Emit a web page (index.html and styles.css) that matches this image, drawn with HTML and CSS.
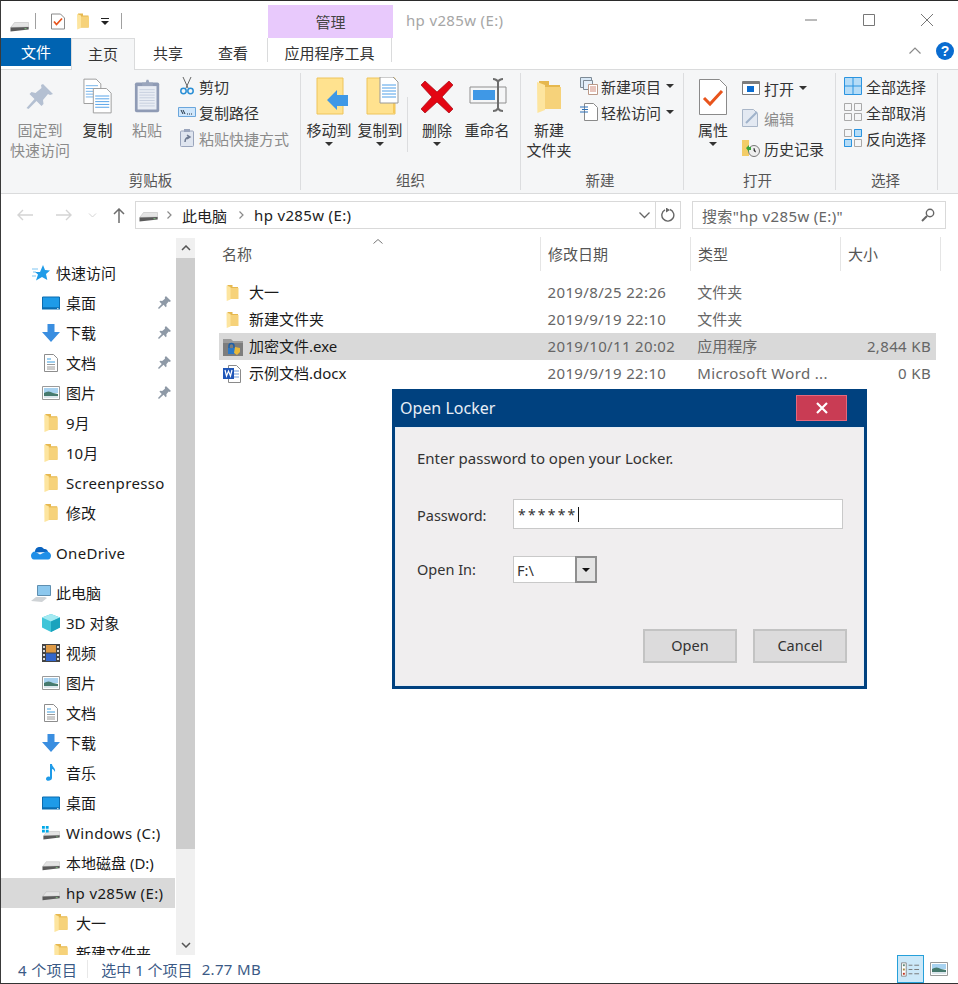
FILE: index.html
```html
<!DOCTYPE html>
<html lang="zh-CN">
<head>
<meta charset="utf-8">
<title>hp v285w (E:)</title>
<link rel="stylesheet" href="styles.css">
</head>
<body>
<svg class="defs" width="0" height="0" aria-hidden="true">
  <symbol id="folder" viewBox="0 0 12 16"><path fill="#e6b84f" d="M1 0h5v2h5.5v12H1z"/><path fill="#f6d27a" d="M3 3h9v11H3z"/><path fill="#fde59f" d="M0 .5 4 2v12.5l-3.800 1.500z"/></symbol>
  <symbol id="drive" viewBox="0 0 19 10"><path fill="#e4e4e4" stroke="#b5b5b5" stroke-width=".5" d="M4.500 .5h14l.2 4.500-18 .5z"/><path fill="#5a5a5a" d="M.5 5.500 18.700 5v2.500L.5 9.500z"/><path fill="#7fbf7f" d="M14.500 6.200h2v1h-2z"/></symbol>
  <symbol id="pin" viewBox="0 0 14 14"><path fill="#8e99a6" d="M8.500 0 14 5.500l-1.500 1-1-.5-2.500 3 .3 2-1 1-2.300-2.500L1 14l-1-1 4-4.500L1.500 6l1-1 2 .5 3-2.500-.2-1.500z"/></symbol>
  <symbol id="pinbig" viewBox="0 0 28 28"><path fill="#b4c0d2" d="M17 1 27 11l-3 1-2-1-5 6 .5 4-2 2-5-5-8 8-2-1 8-9-5-5 2-2 4 1 6-5-.5-3z"/></symbol>
  <symbol id="doc" viewBox="0 0 14 18"><path fill="#fff" stroke="#8d8d8d" d="M.5.5h9l4 4v13H.5z"/><path fill="none" stroke="#3ea0e0" d="M3 5h4M3 8h8"/><path fill="none" stroke="#9a9a9a" d="M3 10.500h8M3 13h8M3 15h8"/></symbol>
  <symbol id="pic" viewBox="0 0 18 14"><path fill="#fff" stroke="#9a9a9a" d="M.5.5h17v13H.5z"/><path fill="#a8d2f0" d="M2 2h14v5H2z"/><path fill="#467a6e" d="M2 7c3-2 6-2 9 0l5 1v2H2z"/><path fill="#dce6ec" d="M2 10h14v2H2z"/></symbol>
  <symbol id="desk" viewBox="0 0 18 13"><path fill="#1e9be8" stroke="#0a6cb0" d="M.5.5h17v11H.5z"/><path fill="#0a6cb0" d="M0 11h18v2H0z"/><path fill="#fff" d="M15 11.500h1.500v.8H15z"/></symbol>
  <symbol id="down" viewBox="0 0 18 18"><path fill="#3a8ee0" d="M5.500 0h7v8H18l-9 10-9-10h5.500z"/></symbol>
  <symbol id="check" viewBox="0 0 14 16"><path fill="#fff" stroke="#8a8a8a" d="M.5.5h9l4 4v11H.5z"/><path fill="none" stroke="#e8541c" stroke-width="1.800" d="M3 8l2.500 3L11 5"/></symbol>
  <symbol id="grid" viewBox="0 0 18 18"><g fill="none" stroke="#a9a9a9"><path d="M.5.5h7v7h-7zM10.500.5h7v7h-7zM.5 10.500h7v7h-7zM10.500 10.500h7v7h-7z"/></g></symbol>
</svg>

<div class="window">
  <header class="titlebar">
    <div class="qat">
      <svg class="q-drive"><use href="#drive"/></svg>
      <i class="q-sep"></i>
      <svg class="q-check"><use href="#check"/></svg>
      <svg class="q-folder"><use href="#folder"/></svg>
      <svg class="q-drop" viewBox="0 0 8 7"><path fill="#222" d="M0 0h8v1H0zM0 3h8L4 7z"/></svg>
      <i class="q-sep q-sep2"></i>
    </div>
    <div class="ctx-tab">管理</div>
    <div class="win-title lat">hp v285w (E:)</div>
    <div class="win-btns">
      <svg viewBox="0 0 12 12"><path stroke="#777" d="M0 6h12"/></svg>
      <svg viewBox="0 0 12 12"><path fill="none" stroke="#777" d="M.5.5h11v11H.5z"/></svg>
      <svg viewBox="0 0 12 12"><path stroke="#777" d="M0 0l12 12M12 0 0 12"/></svg>
    </div>
  </header>

  <nav class="tabs">
    <div class="tab tab-file">文件</div>
    <div class="tab tab-home">主页</div>
    <div class="tab tab-share">共享</div>
    <div class="tab tab-view">查看</div>
    <div class="tab tab-app">应用程序工具</div>
    <div class="tabs-right">
      <svg class="collapse" viewBox="0 0 12 7"><path fill="none" stroke="#8a8a8a" stroke-width="1.200" d="M.5 6.500 6 1l5.500 5.500"/></svg>
      <span class="help">?</span>
    </div>
  </nav>

  <section class="ribbon">
    <div class="group g-clip">
      <div class="g-body">
        <div class="big b-pin dis"><svg class="ri" viewBox="0 0 28 28"><use href="#pinbig"/></svg><span>固定到<br>快速访问</span></div>
        <div class="big b-copy"><svg class="ri" viewBox="0 0 32 38">
          <path fill="#fff" stroke="#9a9a9a" d="M1 1h13l5 5v21H1z"/><path stroke="#6fb0ea" d="M3 8h13M3 11h13M3 14h13M3 17h13M3 20h13"/>
          <path fill="#fff" stroke="#9a9a9a" d="M11 11h14l5 5v21H11z"/><path stroke="#4f9fe8" d="M13 19h15M13 22h15M13 25h15M13 28h15M13 31h15"/></svg><span>复制</span></div>
        <div class="big b-paste dis"><svg class="ri" viewBox="0 0 30 38">
          <rect x="1" y="4" width="27" height="33" rx="2" fill="#8f9bb5"/><path fill="#e9edf4" d="M4 8h21v26H4z"/><path stroke="#c4cddd" d="M6 12h17M6 15h17M6 18h17M6 21h17M6 24h17M6 27h17M6 30h17"/><path fill="#9aa5bc" d="M9 4h4l1-3h2l1 3h4v4H9z"/></svg><span>粘贴</span></div>
        <ul class="smalls">
          <li><svg viewBox="0 0 14 18"><path fill="none" stroke="#666" d="M3 0l5 11M11 0 6 11"/><g fill="none" stroke="#2a8fd6" stroke-width="1.500"><circle cx="3.500" cy="14" r="2.700"/><circle cx="10.500" cy="14" r="2.700"/></g></svg>剪切</li>
          <li class="w-ic"><svg viewBox="0 0 18 10"><path fill="#cfe6fb" stroke="#6aa6dc" d="M.5.500h17v9H.5z"/><path fill="none" stroke="#234" d="M3 3l2 4M5 3l2 4"/><path stroke="#234" d="M9 7h1M11 7h1M13 7h1"/></svg>复制路径</li>
          <li class="dis"><svg viewBox="0 0 14 18"><rect x=".5" y="2" width="13" height="15.500" rx="1" fill="#dfe5ef" stroke="#9aa5bc"/><path fill="#9aa5bc" d="M4 0h6v3H4z"/><path fill="none" stroke="#6f7b92" stroke-width="1.500" d="M5 13c0-3 2-5 5-5M7 6l3 2-3 2"/></svg>粘贴快捷方式</li>
        </ul>
      </div>
      <div class="g-label">剪贴板</div>
    </div>

    <div class="group g-org">
      <div class="g-body">
        <div class="big b-move"><svg class="ri" viewBox="0 0 34 38"><path fill="#ffe28f" stroke="#eec45a" d="M1 1h26v36H1z"/><path fill="#3f98e6" d="M12 27 22 17v5h11v11H22v4z" transform="translate(-1 -4)"/></svg><span>移动到</span><i class="caret"></i></div>
        <div class="big b-copyto"><svg class="ri" viewBox="0 0 34 38"><path fill="#ffe28f" stroke="#eec45a" d="M1 1h28v36H1z"/><path fill="#f5c95c" d="M27 24h2v12h-2z"/><path fill="#fff" stroke="#9a9a9a" d="M14 0h13l5 5v21H14z"/><path stroke="#4f9fe8" d="M16 8h14M16 11h14M16 14h14M16 17h14M16 20h14"/></svg><span>复制到</span><i class="caret"></i></div>
        <i class="v-div"></i>
        <div class="big b-del"><svg class="ri" viewBox="0 0 32 32"><path fill="#e30613" stroke="#a40a14" stroke-width=".7" d="M4 0l12 11L28 0l4 4-11 12 11 12-4 4-12-11L4 32l-4-4 11-12L0 4z"/></svg><span>删除</span><i class="caret"></i></div>
        <div class="big b-ren"><svg class="ri" viewBox="0 0 38 38"><path fill="#f5f6f7" stroke="#8f8f8f" d="M1 10h36v16H1z"/><path fill="#3f98e6" d="M4 13h22v10H4z"/><path fill="#6d6d6d" d="M24 1c3 0 4 1 5 2 1-1 2-2 5-2v2c-2 0-3 1-4 2v26c1 1 2 2 4 2v2c-3 0-4-1-5-2-1 1-2 2-5 2v-2c2 0 3-1 4-2V5c-1-1-2-2-4-2z"/></svg><span>重命名</span></div>
      </div>
      <div class="g-label">组织</div>
    </div>

    <div class="group g-new">
      <div class="g-body">
        <div class="big b-newf"><svg class="ri" viewBox="0 0 24 36"><use href="#folder"/></svg><span>新建<br>文件夹</span></div>
        <ul class="smalls">
          <li><svg viewBox="0 0 18 18"><path fill="#d8e8f6" stroke="#7d8a96" d="M.5.500h11v10H.5z"/><path fill="#e4effa" stroke="#7d8a96" d="M3.500 3.500h9v9h-9z"/><path fill="#fff" stroke="#b98" d="M8.500 7.500h9v10h-9z"/><path stroke="#d08a7a" d="M10 10h6M10 12h6M10 14h6"/></svg>新建项目<i class="drop"></i></li>
          <li><svg viewBox="0 0 18 18"><path fill="#fff" stroke="#8a8a8a" d="M4.500.5h9l4 4v13h-13z"/><path stroke="#2a6fb8" d="M0 4h8M2 6.500h6M0 9h8"/></svg>轻松访问<i class="drop"></i></li>
        </ul>
      </div>
      <div class="g-label">新建</div>
    </div>

    <div class="group g-open">
      <div class="g-body">
        <div class="big b-prop"><svg class="ri" viewBox="0 0 28 36"><path fill="#fff" stroke="#8a8a8a" d="M.5.500h20l7 7v28H.5z"/><path fill="none" stroke="#e8541c" stroke-width="3" d="M5 19l6 6L23 12"/></svg><span>属性</span><i class="caret"></i></div>
        <ul class="smalls smalls-open">
          <li><svg viewBox="0 0 18 14"><path fill="#fff" stroke="#7d7d7d" d="M.5.500h17v13H.5z"/><path fill="#7d7d7d" d="M1 1h16v2H1z"/><path fill="#0a6cd0" d="M5 5h7v6H5z"/></svg>打开<i class="drop"></i></li>
          <li class="dis"><svg viewBox="0 0 18 18"><path fill="#e3e9f2" stroke="#a9b6c8" d="M.5.500h11l4 4v13H.5z"/><path fill="none" stroke="#9fb2ca" stroke-width="2" d="M4 14 15 3"/></svg>编辑</li>
          <li><svg viewBox="0 0 18 18"><path fill="#f3cd68" d="M0 1h7v16H0z"/><circle cx="12" cy="12" r="5.500" fill="#eee" stroke="#777"/><path fill="#37a33a" d="M4 9 7 6v2h2v3H7v2z"/><path stroke="#555" d="M12 9v3l2 1"/></svg>历史记录</li>
        </ul>
      </div>
      <div class="g-label">打开</div>
    </div>

    <div class="group g-sel">
      <div class="g-body">
        <ul class="smalls smalls-sel">
          <li><svg viewBox="0 0 18 18"><path fill="#b5dcf7" stroke="#2a94e0" d="M.5.500h17v17H.5zM9 .5v17M.5 9h17"/></svg>全部选择</li>
          <li><svg viewBox="0 0 18 18"><use href="#grid"/></svg>全部取消</li>
          <li><svg viewBox="0 0 18 18"><use href="#grid"/><path fill="#b5dcf7" stroke="#2a94e0" d="M10.500.5h7v7h-7zM.5 10.500h7v7h-7z"/></svg>反向选择</li>
        </ul>
      </div>
      <div class="g-label">选择</div>
    </div>
  </section>

  <div class="navbar">
    <div class="nav-arrows">
      <svg class="a-back" viewBox="0 0 16 12"><path fill="none" stroke="#d4d4d4" stroke-width="1.400" d="M16 6H1M6 1 1 6l5 5"/></svg>
      <svg class="a-fwd" viewBox="0 0 16 12"><path fill="none" stroke="#d4d4d4" stroke-width="1.400" d="M0 6h15M10 1l5 5-5 5"/></svg>
      <svg class="a-hist" viewBox="0 0 8 5"><path fill="none" stroke="#d4d4d4" d="M.5.5 4 4 7.500.5"/></svg>
      <svg class="a-up" viewBox="0 0 12 15"><path fill="none" stroke="#6d6d6d" stroke-width="1.500" d="M6 15V1M1 6l5-5 5 5"/></svg>
    </div>
    <div class="addr">
      <svg class="addr-drive"><use href="#drive"/></svg>
      <svg class="chev" viewBox="0 0 5 8"><path fill="none" stroke="#8a8a8a" stroke-width="1.200" d="M.5.5 4 4 .5 7.500"/></svg>
      <span>此电脑</span>
      <svg class="chev chev2" viewBox="0 0 5 8"><path fill="none" stroke="#8a8a8a" stroke-width="1.200" d="M.5.5 4 4 .5 7.500"/></svg>
      <span class="lat">hp v285w (E:)</span>
      <svg class="addr-dd" viewBox="0 0 11 7"><path fill="none" stroke="#666" stroke-width="1.300" d="M.5.5l5 5 5-5"/></svg>
      <div class="addr-ref"><svg viewBox="0 0 14 14"><path fill="none" stroke="#666" stroke-width="1.400" d="M9 1.500A6 6 0 1 1 4 1.800"/><path fill="#666" d="M3 0 7 2.500 3 5z" transform="translate(2 -.5)"/></svg></div>
    </div>
    <div class="search">
      <span>搜索"hp v285w (E:)"</span>
      <svg viewBox="0 0 14 14"><circle cx="9" cy="5" r="3.700" fill="none" stroke="#666" stroke-width="1.400"/><path stroke="#666" stroke-width="2" d="M6 8l-5 5"/></svg>
    </div>
  </div>

  <main class="main">
    <aside class="tree">
      <div class="tree-list">
        <div class="row r0"><svg class="ic star" viewBox="0 0 18 16"><path fill="#1f9be8" d="M11 0l2 5 5 .5-4 3.500 1.300 6L10 12l-6 3.500L6 9.500 3 7h5z"/><path stroke="#7cc4f2" d="M0 4h6M1 7h3M0 11h4"/></svg><span>快速访问</span></div>
        <div class="row r1"><svg class="ic"><use href="#desk"/></svg><span>桌面</span><svg class="pin"><use href="#pin"/></svg></div>
        <div class="row r1"><svg class="ic"><use href="#down"/></svg><span>下载</span><svg class="pin"><use href="#pin"/></svg></div>
        <div class="row r1"><svg class="ic"><use href="#doc"/></svg><span>文档</span><svg class="pin"><use href="#pin"/></svg></div>
        <div class="row r1"><svg class="ic"><use href="#pic"/></svg><span>图片</span><svg class="pin"><use href="#pin"/></svg></div>
        <div class="row r1"><svg class="ic"><use href="#folder"/></svg><span>9月</span></div>
        <div class="row r1"><svg class="ic"><use href="#folder"/></svg><span>10月</span></div>
        <div class="row r1"><svg class="ic"><use href="#folder"/></svg><span class="lat">Screenpresso</span></div>
        <div class="row r1"><svg class="ic"><use href="#folder"/></svg><span>修改</span></div>
        <div class="row r0 sect"><svg class="ic cloud" viewBox="0 0 20 13"><path fill="#0a64c0" d="M4 4a5 5 0 0 1 9-2c2-.5 4 1 4 3l-13 .5z"/><path fill="#1f8fe8" d="M4 4.500l5 3 6-3c3 0 5 2 5 4s-1 4-3 4H3c-2 0-3-2-3-4s2-4 4-4z"/></svg><span class="lat">OneDrive</span></div>
        <div class="row r0 sect"><svg class="ic pc" viewBox="0 0 20 17"><path fill="#8cc8ee" stroke="#5f8fb0" d="M6.500 .5h13v10h-13z"/><path fill="#cfd3d6" d="M0 16l5-4h9l2 1-5 4z"/></svg><span>此电脑</span></div>
        <div class="row r1"><svg class="ic" viewBox="0 0 18 18"><path fill="#3fc5d8" d="M9 0l9 3.500v10L9 18l-9-4.500v-10z"/><path fill="#a4eaf2" d="M9 0l9 3.500L9 7.500 0 3.500z"/><path fill="#1aa3bd" d="M9 7.500V18l9-4.500v-10z"/></svg><span>3D 对象</span></div>
        <div class="row r1"><svg class="ic" viewBox="0 0 18 18"><path fill="#444" d="M0 0h18v18H0z"/><path fill="#d94" d="M4 1h10v7.500H4z"/><path fill="#36c" d="M4 9.500h10V17H4z"/><path fill="#ddd" d="M1 2h2v2H1zM1 6h2v2H1zM1 10h2v2H1zM1 14h2v2H1zM15 2h2v2h-2zM15 6h2v2h-2zM15 10h2v2h-2zM15 14h2v2h-2z"/></svg><span>视频</span></div>
        <div class="row r1"><svg class="ic"><use href="#pic"/></svg><span>图片</span></div>
        <div class="row r1"><svg class="ic"><use href="#doc"/></svg><span>文档</span></div>
        <div class="row r1"><svg class="ic"><use href="#down"/></svg><span>下载</span></div>
        <div class="row r1"><svg class="ic" viewBox="0 0 18 18"><path fill="#1f9be8" d="M8 0h2c0 3 4 4 3 8-1-2-2-3-3-3v9c0 3-6 4-6 1 0-2 2-3 4-2z"/></svg><span>音乐</span></div>
        <div class="row r1"><svg class="ic"><use href="#desk"/></svg><span>桌面</span></div>
        <div class="row r1"><svg class="ic ic-d" viewBox="0 0 19 15"><use href="#drive" x="1" y="5" width="18" height="10"/><path fill="#00a8e8" d="M0 0h3v3H0zM4 0h3v3H4zM0 4h3v3H0zM4 4h3v3H4z"/></svg><span class="lat">Windows (C:)</span></div>
        <div class="row r1"><svg class="ic ic-dr"><use href="#drive"/></svg><span>本地磁盘 (D:)</span></div>
        <div class="row r1 on"><svg class="ic ic-dr"><use href="#drive"/></svg><span class="lat">hp v285w (E:)</span></div>
        <div class="row r2"><svg class="ic"><use href="#folder"/></svg><span>大一</span></div>
        <div class="row r2"><svg class="ic"><use href="#folder"/></svg><span>新建文件夹</span></div>
      </div>
      <div class="sbar">
        <div class="sb-btn"><svg viewBox="0 0 10 6"><path fill="none" stroke="#555" stroke-width="1.500" d="M1 5l4-4 4 4"/></svg></div>
        <div class="sb-thumb"></div>
        <div class="sb-track"></div>
        <div class="sb-btn"><svg viewBox="0 0 10 6"><path fill="none" stroke="#555" stroke-width="1.500" d="M1 1l4 4 4-4"/></svg></div>
      </div>
    </aside>

    <div class="files">
      <svg class="sort" viewBox="0 0 10 5"><path fill="none" stroke="#777" d="M.5 4.500 5 .5l4.500 4"/></svg>
      <div class="fhead">
        <div class="col c-name">名称</div>
        <div class="col c-date">修改日期</div>
        <div class="col c-type">类型</div>
        <div class="col c-size">大小</div>
      </div>
      <div class="frow">
        <div class="c-name cell name"><svg class="fi"><use href="#folder"/></svg>大一</div>
        <div class="c-date cell lat">2019/8/25 22:26</div><div class="c-type cell">文件夹</div><div class="c-size cell"></div>
      </div>
      <div class="frow">
        <div class="c-name cell name"><svg class="fi"><use href="#folder"/></svg>新建文件夹</div>
        <div class="c-date cell lat">2019/9/19 22:10</div><div class="c-type cell">文件夹</div><div class="c-size cell"></div>
      </div>
      <div class="frow sel">
        <div class="c-name cell name"><svg class="fi fi-lock" viewBox="0 0 20 18"><path fill="#9b9b9b" d="M0 1h8l2 2h10v15H0z"/><path fill="#7d7d7d" d="M0 5h20v13H0z"/><path fill="none" stroke="#1c5fa8" stroke-width="1.500" d="M6 10V8a2.500 2.500 0 0 1 5 0v2"/><path fill="#2a78c8" d="M5 10h7v6H5z"/><path fill="#e9b93a" d="M12 9l5 1v4l-3 3-3-2z"/></svg>加密文件.exe</div>
        <div class="c-date cell lat">2019/10/11 20:02</div><div class="c-type cell">应用程序</div><div class="c-size cell lat">2,844 KB</div>
      </div>
      <div class="frow">
        <div class="c-name cell name"><svg class="fi fi-word" viewBox="0 0 18 18"><path fill="#fff" stroke="#8a8a8a" d="M5.500 .5h8l4 4v13h-12z"/><path stroke="#6f9bd8" d="M11 6h5M11 9h5M11 12h5"/><path fill="#1f56b8" d="M0 3h11v11H0z"/><path fill="none" stroke="#fff" stroke-width="1.200" d="M2 5l1.500 6L5.500 6l2 5L9 5"/></svg>示例文档.docx</div>
        <div class="c-date cell lat">2019/9/19 22:10</div><div class="c-type cell lat">Microsoft Word ...</div><div class="c-size cell lat">0 KB</div>
      </div>
    </div>
  </main>

  <footer class="status">
    <span class="st-count">4 个项目</span><i class="st-sep"></i>
    <span class="st-sel">选中 1 个项目</span><span class="st-size lat">2.77 MB</span>
    <div class="views">
      <div class="view on"><svg viewBox="0 0 20 15"><path fill="#fff" stroke="#8a8a8a" d="M.5.5h5v14h-5z"/><path fill="#5a8a7a" d="M2 2h2v2H2z"/><path fill="#a08a40" d="M2 6.500h2v2H2z"/><path fill="#c0301c" d="M2 11h2v2H2z"/><path stroke="#777" d="M8 3h4M14 3h5M8 7.500h4M14 7.500h5M8 12h4M14 12h5"/></svg></div>
      <div class="view"><svg viewBox="0 0 18 14"><use href="#pic"/></svg></div>
    </div>
  </footer>

  <div class="dialog">
    <div class="d-title"><span>Open Locker</span><div class="d-close"><svg viewBox="0 0 12 12"><path stroke="#fff" stroke-width="2.200" d="M1 1l10 10M11 1 1 11"/></svg></div></div>
    <div class="d-body">
      <p class="d-msg">Enter password to open your Locker.</p>
      <div class="d-line d-pw"><label>Password:</label><div class="d-input"><span>******</span><i class="cursor"></i></div></div>
      <div class="d-line d-in"><label>Open In:</label><div class="d-combo"><span>F:\</span><div class="d-cbtn"><i></i></div></div></div>
      <div class="d-actions"><div class="d-btn">Open</div><div class="d-btn">Cancel</div></div>
    </div>
  </div>
</div>
</body>
</html>
```

FILE: styles.css
```css
* { box-sizing: border-box; }
html, body { margin: 0; padding: 0; }
body { background: #fff; font-family: "Noto Sans", "Noto Sans CJK SC", sans-serif; font-size: 15px; color: #222; overflow: hidden; }
.defs { position: absolute; }
ul { list-style: none; margin: 0; padding: 0; }
i { display: block; }
svg { display: block; flex: none; }
.lat { letter-spacing: .35px; }

.window { position: relative; width: 958px; height: 984px; display: flex; flex-direction: column; border-top: 1px solid #2b2b2b; border-left: 1px solid #3a3a3a; border-bottom: 1px solid #333; background: #fff; overflow: hidden; }

/* Title bar */
.titlebar { height: 37px; flex: none; display: flex; }
.qat { width: 267px; display: flex; align-items: center; padding-top: 3px; }
.q-drive { width: 19px; height: 10px; margin: 11px 0 0 9px; }
.q-sep { width: 1px; height: 16px; background: #a0a0a0; margin-left: 6px; }
.q-check { width: 14px; height: 17px; margin-left: 15px; }
.q-folder { width: 12px; height: 17px; margin-left: 12px; }
.q-drop { width: 8px; height: 7px; margin-left: 12px; }
.q-sep2 { margin-left: 12px; }
.ctx-tab { width: 125px; margin-top: 4px; background: #e8c9fc; text-align: center; line-height: 34px; color: #444; }
.win-title { margin-left: 13px; line-height: 39px; color: #a6a6a6; flex: 1; }
.win-btns { display: flex; align-items: center; padding: 0 25px 0 0; gap: 46px; }
.win-btns svg { width: 12px; height: 12px; }

/* Tabs */
.tabs { height: 32px; flex: none; display: flex; border-bottom: 1px solid #dadbdc; position: relative; }
.tab { text-align: center; line-height: 32px; color: #333; height: 31px; }
.tab-file { width: 70px; height: 28px; line-height: 28px; background: #0063b1; color: #fff; }
.tab-home { width: 64px; height: 32px; background: #f5f6f7; border: 1px solid #dadbdc; border-bottom: none; position: relative; z-index: 1; line-height: 30px; }
.tab-share { width: 66px; line-height: 30px; }
.tab-view { width: 64px; line-height: 30px; }
.tab-app { width: 125px; margin-left: 2px; border-left: 1px solid #dadbdc; border-right: 1px solid #dadbdc; height: 24px; line-height: 30px; }
.tabs-right { margin-left: auto; display: flex; align-items: center; gap: 15px; padding: 0 4px 6px 0; }
.collapse { width: 12px; height: 7px; }
.help { width: 18px; height: 18px; border-radius: 50%; background: #0a6cd0; color: #fff; font: bold 14px/18px "Liberation Sans", sans-serif; text-align: center; }

/* Ribbon */
.ribbon { height: 124px; flex: none; display: flex; background: #f5f6f7; border-bottom: 1px solid #dadbdc; padding-top: 3px; padding-bottom: 3px; color: #333; }
.group { display: flex; flex-direction: column; border-right: 1px solid #dcdddf; flex: none; }
.g-clip { width: 300px; }
.g-org { width: 220px; }
.g-new { width: 163px; }
.g-open { width: 152px; }
.g-sel { width: 102px; }
.g-body { flex: 1; display: flex; position: relative; min-height: 0; }
.g-label { height: 20px; line-height: 20px; text-align: center; color: #555; font-size: 14.500px; flex: none; }
.g-new .g-label, .g-open .g-label { padding-right: 4px; }
.g-sel .g-label { padding-right: 2px; }
.big { display: flex; flex-direction: column; align-items: center; text-align: center; line-height: 20px; flex: none; position: relative; }
.big span { display: block; white-space: nowrap; }
.ri { height: 38px; width: 38px; margin: 4px 0 5px; }
.dis { color: #8b8b8b; }
.caret { width: 0; height: 0; border: 4px solid transparent; border-top-color: #333; border-bottom: 0; margin: 2px auto 0; }
.b-pin { width: 70px; margin-left: 4px; }
.b-pin .ri { width: 28px; height: 28px; margin: 10px 0 9px; }
.b-copy { width: 47px; margin-left: -1px; }
.b-copy .ri { width: 30px; }
.b-paste { width: 52px; }
.b-paste .ri { width: 27px; }
.smalls { margin: 0 0 0 5px; display: flex; flex-direction: column; }
.smalls li { display: flex; align-items: center; height: 26px; white-space: nowrap; }
.smalls li svg { width: 18px; height: 18px; margin-right: 3px; }
.smalls li.w-ic svg { height: 10px; }
.drop { width: 0; height: 0; border: 4px solid transparent; border-top-color: #333; border-bottom: 0; margin: 0 0 0 5px; }
.b-move { width: 50px; margin-left: 3px; }
.b-move .ri { width: 34px; margin-left: 8px; }
.b-copyto { width: 50px; margin-left: 1px; }
.b-copyto .ri { width: 34px; margin-left: 6px; }
.v-div { width: 1px; height: 55px; background: #dcdddf; margin: 24px 2px 0 2px; }
.b-del { width: 54px; }
.b-del .ri { width: 32px; height: 32px; margin: 8px 0 7px; }
.b-ren { width: 52px; margin-left: -3px; }
.b-ren .ri { margin-left: 2px; }
.b-newf { width: 56px; }
.b-newf .ri { width: 24px; height: 36px; margin: 6px 0 5px; }
.g-new .smalls { margin-left: 3px; }
.b-prop { width: 56px; margin-left: 1px; }
.b-prop .ri { width: 28px; height: 36px; margin: 6px 0 5px; }
.smalls-open { margin: 0 0 0 1px; }
.smalls-open li { height: 30px; }
.smalls-open li svg { margin-right: 4px; }
.smalls-sel { margin: 0 0 0 8px; }
.smalls-sel li svg { margin-right: 4px; }

/* Nav bar */
.navbar { height: 41px; flex: none; display: flex; align-items: center; padding-top: 1px; }
.nav-arrows { width: 134px; display: flex; align-items: center; flex: none; }
.a-back { width: 16px; height: 12px; margin-left: 16px; }
.a-fwd { width: 16px; height: 12px; margin-left: 23px; }
.a-hist { width: 9px; height: 5px; margin-left: 16px; }
.a-up { width: 12px; height: 15px; margin-left: 16px; }
.addr { width: 546px; height: 28px; border: 1px solid #d9d9d9; display: flex; align-items: center; flex: none; }
.addr-drive { width: 19px; height: 10px; margin: 3px 0 0 3px; }
.chev { width: 5px; height: 8px; margin: 0 10px 0 9px; }
.chev2 { margin: 0 10px 0 12px; }
.addr-dd { width: 11px; height: 7px; margin-left: auto; margin-right: 5px; }
.addr-ref { width: 25px; height: 100%; border-left: 1px solid #d9d9d9; display: flex; align-items: center; justify-content: center; }
.addr-ref svg { width: 14px; height: 14px; }
.search { width: 254px; height: 28px; margin-left: 11px; border: 1px solid #d9d9d9; display: flex; align-items: center; justify-content: space-between; padding: 0 10px 0 9px; color: #666; letter-spacing: .35px; flex: none; }
.search svg { width: 14px; height: 14px; }

/* Main */
.main { flex: 1; min-height: 0; display: flex; }
.tree { width: 196px; flex: none; display: flex; overflow: hidden; }
.tree-list { width: 174px; padding-top: 23px; flex: none; margin-right: 1px; }
.row { height: 30px; display: flex; align-items: center; white-space: nowrap; position: relative; color: #1a1a1a; }
.row span { margin-top: -2px; }
.row span.lat { margin-top: 0; }
.row .ic { width: 18px; height: 18px; }
.r0 { padding-left: 31px; }
.r0 span { margin-left: 6px; }
.r1 { padding-left: 41px; }
.r1 span { margin-left: 6px; }
.r2 { padding-left: 51px; }
.r2 span { margin-left: 6px; }
.sect { margin-top: 10px; }
.row.on { background: #d9d9d9; }
.pin { position: absolute; left: 157px; top: 8px; width: 13px; height: 13px; }
.row .star { width: 18px; height: 16px; }
.row .cloud { width: 20px; height: 13px; margin-left: -1px; }
.row .cloud + span, .row .pc + span { margin-left: 5px; }
.row .pc { width: 20px; height: 17px; margin-left: -1px; }
.row .ic-dr { height: 10px; margin-top: 5px; }
.sbar { width: 19px; margin-top: 3px; flex: none; display: flex; flex-direction: column; background: #f0f0f0; }
.sb-btn { height: 20px; display: flex; align-items: center; justify-content: center; flex: none; }
.sb-btn svg { width: 10px; height: 6px; }
.sb-thumb { height: 591px; background: #cdcdcd; flex: none; }
.sb-track { flex: 1; }

.files { flex: 1; min-width: 0; position: relative; padding-left: 22px; }
.sort { position: absolute; left: 176px; top: 4px; width: 10px; height: 5px; }
.fhead { display: flex; height: 44px; color: #555; }
.fhead .col { height: 34px; line-height: 34px; padding-left: 7px; border-right: 1px solid #e5e5e5; margin-top: 2px; }
.fhead .c-name { padding-left: 3px; }
.c-name { width: 322px; }
.c-date { width: 150px; }
.c-type { width: 150px; }
.c-size { width: 100px; }
.frow { display: flex; height: 27px; align-items: center; color: #666; width: 717px; }
.frow.sel { background: #d9d9d9; }
.cell { padding-left: 7px; padding-bottom: 2px; white-space: nowrap; overflow: hidden; }
.cell.c-name { padding-left: 7px; width: 322px; }
.frow .c-size { width: 96px; text-align: right; padding-right: 5px; padding-left: 0; }
.name { display: flex; align-items: center; gap: 10px; color: #1a1a1a; }
.name svg { margin-top: 2px; }
.fi { width: 13px; height: 16px; }
.fi-lock { width: 20px; height: 18px; margin-left: -3px; margin-right: -4px; }
.fi-word { width: 18px; height: 18px; margin-left: -3px; margin-right: -2px; }

/* Status */
.status { height: 28px; flex: none; display: flex; align-items: center; padding-left: 17px; color: #3b5a86; }
.st-count { letter-spacing: .35px; }
.st-sep { width: 1px; height: 18px; background: #e8e8e8; margin: 0 13px 0 10px; }
.st-size { margin-left: 9px; }
.views { margin-left: auto; display: flex; align-items: stretch; height: 100%; padding-right: 9px; gap: 5px; }
.view { width: 20px; display: flex; align-items: center; justify-content: center; }
.view svg { width: 18px; height: 14px; }
.view.on { width: 27px; background: #cce8f8; border: 1px solid #26a0da; }
.view.on svg { width: 19px; height: 15px; }

/* Dialog */
.dialog { position: absolute; left: 391px; top: 388px; width: 475px; height: 300px; background: #00417f; padding: 0 3px 3px; display: flex; flex-direction: column; font-family: "Noto Sans", sans-serif; font-size: 14.500px; color: #333; }
.d-title { height: 38px; flex: none; display: flex; align-items: center; justify-content: space-between; color: #e8eef6; font-size: 16px; padding: 0 17px 0 5px; }
.d-close { width: 51px; height: 26px; background: #c93c54; border: 1px solid #e5677c; display: flex; align-items: center; justify-content: center; margin-top: -1px; }
.d-close svg { width: 12px; height: 12px; }
.d-body { flex: 1; background: #f0eeef; border: 1px solid #e6edf5; padding: 20px 0 0 21px; display: flex; flex-direction: column; }
.d-msg { margin: 0; line-height: 20px; font-size: 15px; }
.d-line { display: flex; align-items: center; }
.d-line label { width: 96px; flex: none; }
.d-pw { margin-top: 31px; height: 30px; }
.d-pw label { padding-top: 2px; }
.d-in { margin-top: 27px; height: 27px; }
.d-in label { margin-top: -2px; }
.d-input { width: 330px; height: 30px; background: #fff; border: 1px solid #c9c9c9; display: flex; align-items: center; padding-left: 4px; }
.cursor { width: 1px; height: 15px; background: #111; margin-left: 1px; }
.d-input span { letter-spacing: 2.200px; font-size: 14px; }
.d-combo { width: 84px; height: 27px; background: #fff; border: 1px solid #c9c9c9; display: flex; align-items: center; justify-content: space-between; padding-left: 3px; }
.d-cbtn { width: 22px; height: 27px; margin: -1px -1px -1px 0; background: #e4e4e4; border: 2px solid #8f8f8f; display: flex; align-items: center; justify-content: center; }
.d-cbtn i { width: 0; height: 0; border: 4px solid transparent; border-top-color: #111; border-bottom: 0; }
.d-actions { margin-top: 46px; padding-right: 16px; display: flex; justify-content: flex-end; gap: 16px; }
.d-btn { width: 94px; height: 34px; background: #dcdbdc; border: 2px solid #c3c3c3; text-align: center; line-height: 28px; }
```
